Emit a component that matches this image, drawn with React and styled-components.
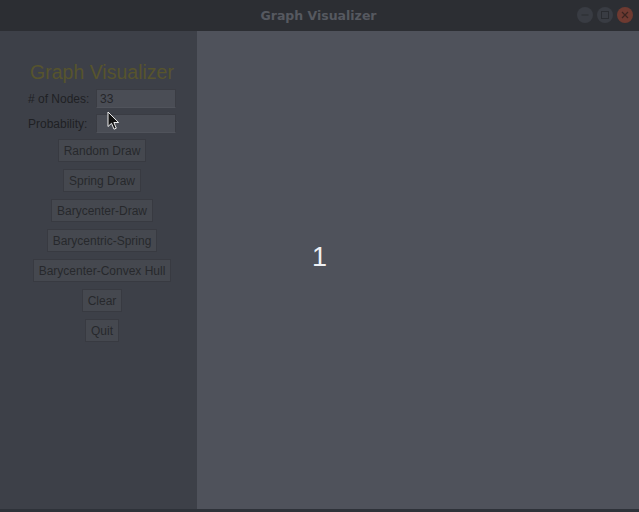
import styled, { createGlobalStyle } from 'styled-components';

const GlobalStyle = createGlobalStyle`
  html, body {
    margin: 0;
    padding: 0;
    background: #2b2d32;
  }
`;

const Window = styled.div`
  position: relative;
  width: 639px;
  height: 512px;
  display: flex;
  flex-direction: column;
  overflow: hidden;
  font-family: "Liberation Sans", Arial, sans-serif;
`;

const TitleBar = styled.div`
  height: 31px;
  flex: none;
  background: #2c2e33;
  display: flex;
  align-items: center;
  justify-content: center;
  position: relative;
`;

const TitleText = styled.div`
  font-family: "DejaVu Sans", "Noto Sans", sans-serif;
  font-weight: bold;
  font-size: 12.5px;
  color: #565960;
  margin-left: -2px;
`;

const Controls = styled.div`
  position: absolute;
  right: 6px;
  top: 7px;
  display: flex;
  gap: 4px;
`;

const Ctrl = styled.div`
  width: 16px;
  height: 16px;
  border-radius: 50%;
  background: ${(p) => (p.$close ? '#6e3a31' : '#393c43')};
  display: flex;
  align-items: center;
  justify-content: center;
`;

const Body = styled.div`
  flex: 1;
  display: flex;
`;

const Sidebar = styled.div`
  width: 197px;
  flex: none;
  background: #3d4048;
  display: flex;
  flex-direction: column;
  align-items: center;
  padding: 29px 0 0 7px;
  box-sizing: border-box;
`;

const Heading = styled.h1`
  margin: 0 0 5px 0;
  font-family: "Liberation Sans", Arial, sans-serif;
  font-weight: normal;
  font-size: 19.5px;
  color: #57542d;
  line-height: 24px;
`;

const Form = styled.div`
  display: grid;
  grid-template-columns: 68px 80px;
  row-gap: 6px;
  align-items: center;
`;

const Label = styled.label`
  font-size: 12px;
  color: #1f2024;
`;

const Field = styled.div`
  height: 19px;
  box-sizing: border-box;
  background: #4a4d55;
  border: 1px solid #3a3c43;
  border-bottom-color: #50535b;
  font-size: 12px;
  color: #25262a;
  padding: 2px 3px;
  line-height: 14px;
`;

const Buttons = styled.div`
  display: flex;
  flex-direction: column;
  align-items: center;
  gap: 7px;
  margin-top: 6px;
`;

const Button = styled.div`
  height: 23px;
  box-sizing: border-box;
  padding: 0 5px;
  background: #45484f;
  border: 1px solid #383a41;
  font-size: 12px;
  color: #27282c;
  display: flex;
  align-items: center;
  justify-content: center;
`;

const Canvas = styled.div`
  flex: 1;
  background: #4f525b;
  display: flex;
  align-items: center;
  justify-content: center;
  padding: 0 197px 26px 0;
`;

const Count = styled.div`
  font-family: "Liberation Sans", Arial, sans-serif;
  font-size: 27px;
  color: #eef0f4;
`;

const BottomStrip = styled.div`
  height: 3px;
  flex: none;
  background: #2e3239;
`;

const Cursor = styled.svg`
  position: absolute;
  left: 107px;
  top: 111px;
`;

const buttons = [
  'Random Draw',
  'Spring Draw',
  'Barycenter-Draw',
  'Barycentric-Spring',
  'Barycenter-Convex Hull',
  'Clear',
  'Quit',
];

export default function App() {
  return (
    <Window>
      <GlobalStyle />
      <TitleBar>
        <TitleText>Graph Visualizer</TitleText>
        <Controls>
          <Ctrl>
            <svg width="8" height="8" viewBox="0 0 8 8">
              <path d="M0.5 4H7.5" stroke="#2a2c31" strokeWidth="1" />
            </svg>
          </Ctrl>
          <Ctrl>
            <svg width="8" height="8" viewBox="0 0 8 8">
              <rect x="0.5" y="0.5" width="7" height="7" fill="none" stroke="#2a2c31" strokeWidth="1" />
            </svg>
          </Ctrl>
          <Ctrl $close>
            <svg width="8" height="8" viewBox="0 0 8 8">
              <path d="M1 1L7 7M7 1L1 7" stroke="#3a2420" strokeWidth="1.2" />
            </svg>
          </Ctrl>
        </Controls>
      </TitleBar>
      <Body>
        <Sidebar>
          <Heading>Graph Visualizer</Heading>
          <Form>
            <Label># of Nodes:</Label>
            <Field>33</Field>
            <Label>Probability:</Label>
            <Field />
          </Form>
          <Buttons>
            {buttons.map((b) => (
              <Button key={b}>{b}</Button>
            ))}
          </Buttons>
        </Sidebar>
        <Canvas>
          <Count>1</Count>
        </Canvas>
      </Body>
      <BottomStrip />
      <Cursor width="14" height="20" viewBox="0 0 14 20">
        <path
          d="M1 1L1 15.5L4.5 12.3L7 18.2L9.3 17.2L6.9 11.5L11.6 11.5Z"
          fill="#111"
          stroke="#eee"
          strokeWidth="1"
          strokeLinejoin="round"
        />
      </Cursor>
    </Window>
  );
}
